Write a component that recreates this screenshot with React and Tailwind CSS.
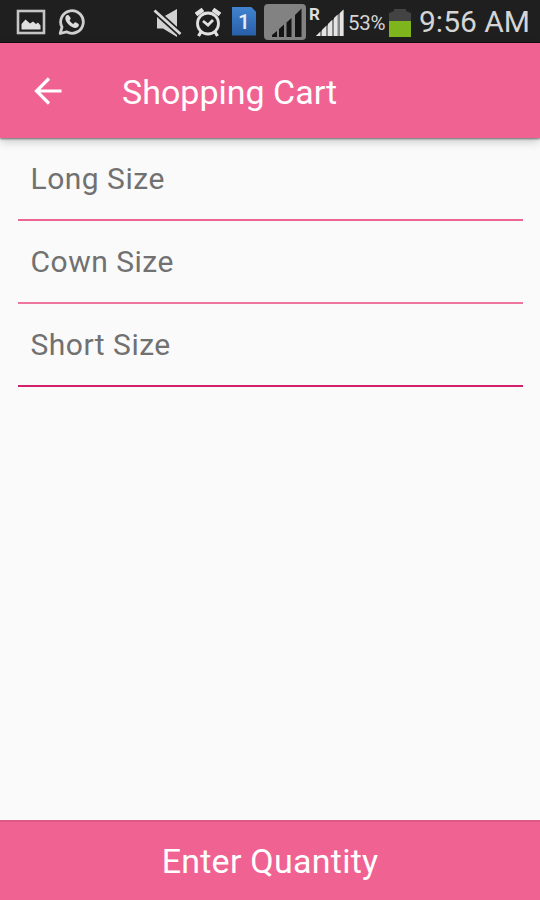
import React from 'react';

const sizes = [
  { label: 'Long Size', row: 'border-[#ec6593]' },
  { label: 'Cown Size', row: 'border-[#ee769e]' },
  { label: 'Short Size', row: 'border-[#d3206a]' },
];

function StatusBar() {
  return (
    <div className="flex h-[43px] shrink-0 items-center whitespace-nowrap border-b border-[#111] bg-[#1f1f1f] text-[#d5d5d5]">
      <svg className="ml-4 mt-0.5 shrink-0" width="30" height="26" viewBox="0 0 30 26">
        <rect x="2" y="2" width="26" height="22" fill="none" stroke="#c5c5c5" strokeWidth="2.600" />
        <path d="M5.500 20.500v-5.500l4-4.500 4.500 4 3-2 3 2.500 2-1.500 2.500 3v4z" fill="#e0e0e0" />
      </svg>

      <svg className="ml-3 mt-0.5 shrink-0" width="28" height="28" viewBox="0 0 28 28">
        <path d="M2.200 25.500l1.800-6.300A11.300 11.300 0 1 1 8.500 23.800z" fill="none" stroke="#cfcfcf" strokeWidth="2.800" strokeLinejoin="round" />
        <path d="M10.600 7.200c-.7-.5-1.900-.3-2.400.5-1.700 2.200-.7 5.200 1.500 7.900 2.400 2.900 5.800 4.900 8.700 4.100 1.800-.5 2.700-2 2.400-3.300-.1-.6-3-2.100-3.600-2.100-.7 0-1.300 1.600-1.900 1.600-.9 0-3.400-2.300-3.600-3.400-.1-.6 1.100-1.300 1-2-.1-.7-1.400-2.800-2.100-3.300z" fill="#dcdcdc" />
      </svg>

      <svg className="ml-[67px] mt-0.5 shrink-0" width="30" height="30" viewBox="0 0 30 30">
        <path d="M4 10h6l14-8v28L10 21.500H4z" fill="#d2d2d2" />
        <path d="M1 3l28 25.500" stroke="#1f1f1f" strokeWidth="6" />
        <path d="M1.500 3.500l26 23.500" stroke="#d8d8d8" strokeWidth="2.800" />
      </svg>

      <svg className="ml-[11px] mt-0.5 shrink-0" width="28" height="30" viewBox="0 0 28 30" fill="none" stroke="#e1e1e1">
        <circle cx="14" cy="16.500" r="10.500" strokeWidth="2.800" />
        <path d="M9 14l5 4 5-5" strokeWidth="2.800" />
        <path d="M2 7.500l7-5M26 7.500l-7-5" strokeWidth="4.500" />
        <path d="M7 25l-2.500 4M21 25l2.500 4" strokeWidth="3.200" />
      </svg>

      <div className="ml-[10px] flex h-[29px] w-6 shrink-0 items-center justify-center bg-linear-to-b from-[#4183cf] to-[#285fa8] pt-1 text-[21px] font-medium text-[#e6edf5] [clip-path:polygon(0_0,78%_0,100%_18%,100%_100%,0_100%)]">
        1
      </div>

      <svg className="ml-2 mt-0.5 shrink-0" width="42" height="36" viewBox="0 0 42 36">
        <rect width="42" height="36" rx="4" fill="#828282" />
        <path d="M8 33v-2l5-4v6zM15 33v-8l5-4.500V33zM22.500 33V18.500l5-4.500v19zM31 33V11l6.500-6.500V33z" fill="#141414" />
      </svg>

      <svg className="ml-[3px] shrink-0 overflow-visible" width="36" height="31" viewBox="0 0 36 31">
        <path d="M7 30L34.500 3.500V30z" fill="#858585" />
        <path d="M7 30l4-4v4zM13 30v-6l4-4v10zM19 30V18l4-4v16zM25 30V12l3.500-3.500V30zM31 30V7l3.500-3.500V30z" fill="#e4e4e4" />
        <text x="0" y="14" fontSize="17" fontWeight="700" fill="#dedede">R</text>
      </svg>

      <span className="ml-[3px] mt-1 w-[38px] text-[20.500px] leading-6 tracking-[-0.300px]">53%</span>

      <svg className="ml-[3px] mt-0.5 shrink-0" width="22" height="29" viewBox="0 0 22 29">
        <path d="M0 28V5l5-2V1h12v2l5 2v23z" fill="#434343" />
        <path d="M0 13h22v16H0z" fill="#7fb51c" />
      </svg>

      <span className="ml-2 mt-0.5 text-[30px] leading-8">9:56 AM</span>
    </div>
  );
}

export default function App() {
  return (
    <div className="flex h-screen w-full flex-col overflow-hidden bg-[#fafafa] font-[Roboto,sans-serif]">
      <StatusBar />

      <header className="z-10 flex h-[95px] shrink-0 items-center bg-[#f06292] text-white shadow-[0_1px_2px_rgba(0,0,0,0.5),0_4px_9px_rgba(0,0,0,0.18)]">
        <svg className="ml-[33px] shrink-0" width="29" height="28" viewBox="0 0 29 28" fill="none" stroke="currentColor" strokeWidth="3.200">
          <path d="M28.500 14H3M16 1.500L3.500 14 16 26.500" />
        </svg>
        <h1 className="ml-[60px] whitespace-nowrap pt-0.5 text-[34px] leading-10">Shopping Cart</h1>
      </header>

      <main className="flex-1 px-[17.500px]">
        {sizes.map((item) => (
          <div
            key={item.label}
            className={`flex h-[83px] items-center border-b-2 pl-[13px] text-[30px] leading-9 tracking-[0.500px] text-[#717171] ${item.row}`}
          >
            {item.label}
          </div>
        ))}
      </main>

      <button className="flex h-20 shrink-0 items-center justify-center whitespace-nowrap border-t-2 border-[#df5986] bg-[#f06292] text-[34px] leading-10 tracking-[0.250px] text-white">
        Enter Quantity
      </button>
    </div>
  );
}
